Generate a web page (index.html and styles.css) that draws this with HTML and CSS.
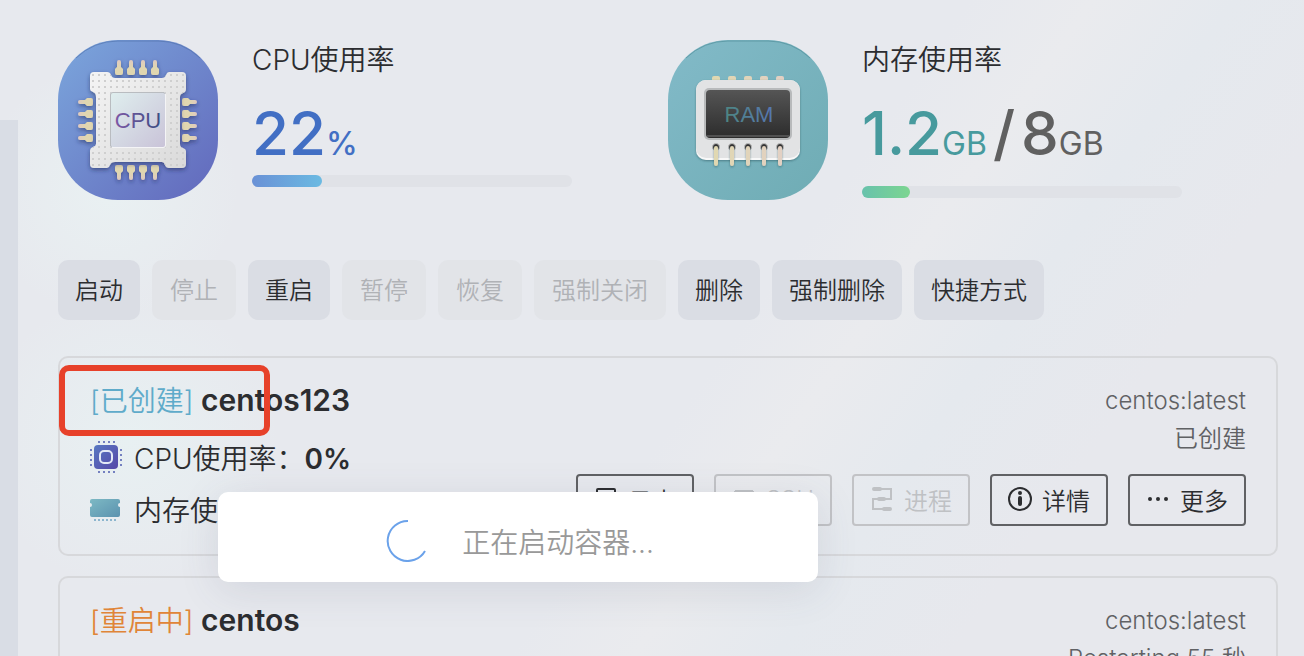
FILE: index.html
```html
<!DOCTYPE html>
<html lang="zh-CN">
<head>
  <meta charset="UTF-8" />
  <meta name="viewport" content="width=device-width, initial-scale=1.0"/>
  <title>容器管理</title>
  <link rel="stylesheet" href="styles.css">
</head>
<body>
  <div class="layout">
    <aside class="sidebar"></aside>

    <main class="content">
      <section class="stats">
        <div class="stat">
          <svg class="stat-icon" viewBox="0 0 160 160">
            <defs>
              <linearGradient id="cpuBg" x1="0" y1="0" x2="1" y2="1">
                <stop offset="0" stop-color="#7ba6dc"/>
                <stop offset="1" stop-color="#6268bc"/>
              </linearGradient>
              <linearGradient id="chip" x1="0" y1="0" x2="1" y2="1">
                <stop offset="0" stop-color="#f4f4f4"/>
                <stop offset="1" stop-color="#dadada"/>
              </linearGradient>
              <linearGradient id="core" x1="0" y1="0" x2="1" y2="1">
                <stop offset="0" stop-color="#dfeeee"/>
                <stop offset="1" stop-color="#c9c3d8"/>
              </linearGradient>
              <linearGradient id="cpuText" x1="0" y1="0" x2="1" y2="0">
                <stop offset="0" stop-color="#7d58a5"/>
                <stop offset="1" stop-color="#3b4d82"/>
              </linearGradient>
              <linearGradient id="gold" x1="0" y1="0" x2="0" y2="1">
                <stop offset="0" stop-color="#dfc9c0"/>
                <stop offset="0.5" stop-color="#e0d6b0"/>
                <stop offset="1" stop-color="#e0d6b0"/>
              </linearGradient>
              <pattern id="dots" width="6" height="6" patternUnits="userSpaceOnUse">
                <rect x="4" y="4" width="2" height="2" fill="#cfcfcf"/>
              </pattern>
              <g id="pin">
                <path d="M-2 7V2a2 2 0 0 1 4 0v5l2 2v4a2 2 0 0 1-2 2h-4a2 2 0 0 1-2-2V9z" fill="url(#gold)"/>
              </g>
              <g id="pins">
                <use href="#pin" x="-18"/>
                <use href="#pin" x="-6"/>
                <use href="#pin" x="6"/>
                <use href="#pin" x="18"/>
              </g>
              <path id="chipShape" d="M36 32H49Q52 32 53 35T57 38H104Q107 38 108 35T111 32H124Q128 32 128 36V49Q128 52 125 53T122 57V104Q122 107 125 108T128 111V124Q128 128 124 128H111Q108 128 107 125T104 122H57Q53 122 52 125T49 128H36Q32 128 32 124V111Q32 108 35 107T38 104V57Q38 53 35 52T32 49V36Q32 32 36 32Z"/>
              <filter id="soft" x="-20%" y="-20%" width="140%" height="140%">
                <feDropShadow dx="0" dy="2" stdDeviation="2" flood-color="#222a55" flood-opacity="0.55"/>
              </filter>
            </defs>
            <rect width="160" height="160" rx="60" fill="url(#cpuBg)"/>
            <path d="M18 18Q36 1 60 1H100Q124 1 142 18" fill="none" stroke="#4f6fa8" stroke-width="1" opacity="0.6"/>
            <g filter="url(#soft)">
              <use href="#pins" transform="translate(79 20)"/>
              <use href="#pins" transform="translate(79 140) scale(1 -1)"/>
              <use href="#pins" transform="translate(20 80) rotate(-90)"/>
              <use href="#pins" transform="translate(139 80) rotate(90)"/>
            </g>
            <use href="#chipShape" fill="url(#chip)" filter="url(#soft)"/>
            <use href="#chipShape" fill="url(#dots)"/>
            <rect x="52" y="52" width="56" height="56" rx="3" fill="#f4f4f6"/>
            <path d="M52 106V55Q52 52 55 52H106L108 54H54V108z" fill="#b9bcc0"/>
            <rect x="53" y="53" width="54" height="54" rx="2" fill="url(#core)"/>
            <text x="80" y="88" text-anchor="middle" class="chip-text" fill="url(#cpuText)">CPU</text>
          </svg>
          <div class="stat-body">
            <div class="stat-title">CPU使用率</div>
            <div class="stat-value blue">22<span class="unit percent">%</span></div>
            <div class="bar"><div class="bar-fill bar-cpu" style="width: 22%"></div></div>
          </div>
        </div>

        <div class="stat">
          <svg class="stat-icon" viewBox="0 0 160 160">
            <defs>
              <linearGradient id="ramBg" x1="0" y1="0" x2="1" y2="1">
                <stop offset="0" stop-color="#82bac8"/>
                <stop offset="1" stop-color="#6facb4"/>
              </linearGradient>
              <linearGradient id="screen" x1="0" y1="0" x2="0" y2="1">
                <stop offset="0" stop-color="#555"/>
                <stop offset="1" stop-color="#2c2c2c"/>
              </linearGradient>
              <linearGradient id="ramText" x1="0" y1="0" x2="1" y2="0">
                <stop offset="0" stop-color="#4d8681"/>
                <stop offset="1" stop-color="#5676b2"/>
              </linearGradient>
              <linearGradient id="legs" x1="44" y1="0" x2="116" y2="0" gradientUnits="userSpaceOnUse">
                <stop offset="0" stop-color="#e0d8b0"/>
                <stop offset="1" stop-color="#e2d0c4"/>
              </linearGradient>
              <filter id="ramShadow" x="-20%" y="-20%" width="140%" height="140%">
                <feDropShadow dx="0" dy="1" stdDeviation="1" flood-color="#1e4650" flood-opacity="0.5"/>
              </filter>
            </defs>
            <rect width="160" height="160" rx="60" fill="url(#ramBg)"/>
            <path d="M18 18Q36 1 60 1H100Q124 1 142 18" fill="none" stroke="#53909b" stroke-width="1" opacity="0.7"/>
            <path d="M44 42V38q0-2 2-2h4q2 0 2 2v4zM60 42V38q0-2 2-2h4q2 0 2 2v4zM76 42V38q0-2 2-2h4q2 0 2 2v4zM92 42V38q0-2 2-2h4q2 0 2 2v4zM108 42V38q0-2 2-2h4q2 0 2 2v4z" fill="url(#legs)"/>
            <rect x="28" y="40" width="104" height="80" rx="10" fill="#f8f8f8" filter="url(#ramShadow)"/>
            <rect x="28" y="40" width="104" height="78" rx="10" fill="#e2e3e4"/>
            <rect x="36" y="48" width="88" height="52" rx="5" fill="#b8babb"/>
            <rect x="38" y="50" width="84" height="48" rx="4" fill="url(#screen)"/>
            <path d="M39 96H121" stroke="#777" stroke-width="1"/>
            <text x="81" y="82" text-anchor="middle" class="chip-text" fill="url(#ramText)">RAM</text>
            <g fill="#333" stroke="#bcbcbc" stroke-width="1">
              <circle cx="48" cy="107" r="3.5"/>
              <circle cx="64" cy="107" r="3.5"/>
              <circle cx="80" cy="107" r="3.5"/>
              <circle cx="96" cy="107" r="3.5"/>
              <circle cx="112" cy="107" r="3.5"/>
            </g>
            <g fill="url(#legs)" filter="url(#ramShadow)">
              <path d="M46 108a2 2 0 0 1 4 0v16a2 2 0 0 1-4 0zM62 108a2 2 0 0 1 4 0v16a2 2 0 0 1-4 0zM78 108a2 2 0 0 1 4 0v16a2 2 0 0 1-4 0zM94 108a2 2 0 0 1 4 0v16a2 2 0 0 1-4 0zM110 108a2 2 0 0 1 4 0v16a2 2 0 0 1-4 0z"/>
            </g>
          </svg>
          <div class="stat-body">
            <div class="stat-title">内存使用率</div>
            <div class="stat-value memory"><span class="teal">1.2<span class="unit">GB</span></span><span class="slash">/</span>8<span class="unit">GB</span></div>
            <div class="bar"><div class="bar-fill bar-ram" style="width: 15%"></div></div>
          </div>
        </div>
      </section>

      <div class="toolbar">
        <button type="button">启动</button>
        <button type="button" disabled>停止</button>
        <button type="button">重启</button>
        <button type="button" disabled>暂停</button>
        <button type="button" disabled>恢复</button>
        <button type="button" disabled>强制关闭</button>
        <button type="button">删除</button>
        <button type="button">强制删除</button>
        <button type="button">快捷方式</button>
      </div>

      <section class="card">
        <div class="highlight"></div>
        <div class="card-left">
          <h3><span class="status created">[已创建]</span> centos123</h3>
          <div class="usage">
            <svg width="32" height="32" viewBox="0 0 32 32">
              <defs>
                <linearGradient id="miniCpu" x1="0" y1="0" x2="1" y2="1">
                  <stop offset="0" stop-color="#5878c2"/>
                  <stop offset="1" stop-color="#5748a8"/>
                </linearGradient>
              </defs>
              <rect x="4" y="4" width="24" height="24" rx="4" fill="url(#miniCpu)"/>
              <rect x="10" y="10" width="12" height="12" rx="4" fill="none" stroke="#e4e9f6" stroke-width="2"/>
              <path d="M8 1H25M8 31H25" stroke="#7480c0" stroke-width="2" stroke-dasharray="2 3"/>
              <path d="M1 8V25M31 8V25" stroke="#7480c0" stroke-width="2" stroke-dasharray="2 3"/>
            </svg>
            <span>CPU使用率：<b>0%</b></span>
          </div>
          <div class="usage">
            <svg width="32" height="32" viewBox="0 0 32 32">
              <defs>
                <linearGradient id="miniRam" x1="0" y1="0" x2="1" y2="1">
                  <stop offset="0" stop-color="#7db9c4"/>
                  <stop offset="1" stop-color="#5b92af"/>
                </linearGradient>
              </defs>
              <path d="M2 6H28Q30 6 30 8V10a2 2 0 0 0 0 4V22Q30 24 28 24H2Q0 24 0 22V14a2 2 0 0 0 0-4V8Q0 6 2 6Z" fill="url(#miniRam)"/>
              <path d="M4 27H27" stroke="#8db6ce" stroke-width="2" stroke-dasharray="2 2"/>
            </svg>
            <span>内存使用率：<b>0%</b></span>
          </div>
        </div>
        <div class="card-right">
          <div class="image-name">centos:latest</div>
          <div class="state">已创建</div>
          <div class="actions">
            <button type="button">
              <svg width="24" height="24" viewBox="0 0 24 24" fill="none" stroke="currentColor" stroke-width="2">
                <rect x="3" y="2" width="18" height="20" rx="1"/>
                <path d="M7 8h10M7 13h10"/>
              </svg>
              日志
            </button>
            <button type="button" disabled>
              <svg width="24" height="24" viewBox="0 0 24 24" fill="none" stroke="currentColor" stroke-width="2">
                <path d="M3 5h18v14H3z"/>
                <path d="M3 5h18" stroke-width="4"/>
              </svg>
              SSH
            </button>
            <button type="button" disabled>
              <svg width="24" height="24" viewBox="0 0 24 24" fill="none" stroke="currentColor" stroke-width="2">
                <path d="M5 2H21V12H3V22H19"/>
                <path d="M4 2h6M9 12h5M14 22h6" stroke-width="4" stroke-linecap="round"/>
              </svg>
              进程
            </button>
            <button type="button">
              <svg width="24" height="24" viewBox="0 0 24 24" fill="none" stroke="currentColor" stroke-width="2">
                <circle cx="12" cy="12" r="11"/>
                <path d="M12 11v6" stroke-width="4" stroke-linecap="round"/>
                <circle cx="12" cy="6" r="2" fill="currentColor" stroke="none"/>
              </svg>
              详情
            </button>
            <button type="button">
              <svg width="24" height="24" viewBox="0 0 24 24" fill="currentColor">
                <circle cx="4" cy="12" r="2"/>
                <circle cx="12" cy="12" r="2"/>
                <circle cx="20" cy="12" r="2"/>
              </svg>
              更多
            </button>
          </div>
        </div>
      </section>

      <section class="card">
        <div class="card-left">
          <h3><span class="status restarting">[重启中]</span> centos</h3>
        </div>
        <div class="card-right">
          <div class="image-name">centos:latest</div>
          <div class="state">Restarting 55 秒</div>
        </div>
      </section>
    </main>
  </div>

  <div class="toast" role="status">
    <svg width="42" height="42" viewBox="0 0 42 42">
      <path d="M22 1A20 20 0 1 0 39 31" fill="none" stroke="#6ba2ea" stroke-width="2"/>
    </svg>
    <span>正在启动容器...</span>
  </div>
</body>
</html>
```
FILE: styles.css
```css
* {
  box-sizing: border-box;
}
body {
  margin: 0;
  height: 100vh;
  overflow: hidden;
  font-family: Inter, "Noto Sans CJK SC", sans-serif;
  font-weight: 350;
  color: #2c2d30;
  background:
    radial-gradient(circle at 110px 190px, rgba(234, 244, 244, 0.7), rgba(234, 244, 244, 0) 130px),
    radial-gradient(circle at 130px 440px, rgba(232, 242, 243, 0.8), rgba(232, 242, 243, 0) 150px),
    linear-gradient(125deg, #e7e9ee 55%, #eaebee 62%, #e5e9ee 70%, #e7e8ed 80%);
}
button {
  font: inherit;
  color: inherit;
}
.layout {
  display: flex;
  height: 100vh;
}
.sidebar {
  flex: 0 0 18px;
  margin-top: 120px;
  background: #d9dde5;
}
.content {
  flex: 1;
  padding: 40px 26px 0 40px;
}

/* usage overview */
.stats {
  display: grid;
  grid-template-columns: 1fr 1fr;
}
.stat {
  display: flex;
  gap: 34px;
}
.stat-icon {
  width: 160px;
  height: 160px;
}
.chip-text {
  font-family: "Liberation Sans", Arial, sans-serif;
  font-size: 22px;
}
.stat-title {
  font-size: 28px;
  line-height: 40px;
}
.stat-value {
  margin: 19px 0 8px;
  font-size: 60px;
  line-height: 68px;
  font-weight: 500;
  color: #606060;
  white-space: nowrap;
}
.stat-value.memory {
  margin-bottom: 19px;
}
.stat-value.blue {
  color: #426fc4;
}
.teal {
  color: #479a9d;
}
.unit {
  font-size: 32px;
  line-height: 32px;
  font-weight: 400;
}
.percent {
  font-weight: 500;
}
.slash {
  margin: 0 6px;
}
.bar {
  width: 320px;
  height: 12px;
  border-radius: 6px;
  background: #e0e2e7;
}
.bar-fill {
  height: 12px;
  border-radius: 6px;
}
.bar-cpu {
  background: linear-gradient(90deg, #6a91d6, #6bbae2);
}
.bar-ram {
  background: linear-gradient(90deg, #68c2ac, #7cd590);
}

/* batch actions */
.toolbar {
  display: flex;
  gap: 12px;
  margin: 60px 0 36px;
}
.toolbar button {
  height: 60px;
  padding: 0 17px 4px;
  border: 0;
  border-radius: 10px;
  font-size: 24px;
  background: #dadde4;
}
.toolbar button:disabled {
  padding: 0 18px 4px;
  color: #b0b2b6;
  background: #e2e4e8;
}

/* container list */
.card {
  position: relative;
  display: flex;
  justify-content: space-between;
  height: 200px;
  margin-bottom: 20px;
  padding: 22px 30px;
  border: 2px solid #d7d8db;
  border-radius: 10px;
}
.card h3 {
  margin: 0;
  font-size: 30px;
  line-height: 40px;
  font-weight: 600;
}
.status {
  font-size: 28px;
  font-weight: 350;
}
.created {
  color: #5fabca;
}
.restarting {
  color: #e08538;
}
.usage {
  display: flex;
  align-items: center;
  gap: 12px;
  height: 40px;
  margin-top: 16px;
  font-size: 28px;
}
.usage + .usage {
  margin-top: 12px;
}
.usage b {
  font-weight: 600;
}
.card-right {
  text-align: right;
  font-size: 24px;
  color: #606164;
}
.image-name {
  line-height: 42px;
}
.state {
  line-height: 34px;
}
.actions {
  display: flex;
  justify-content: flex-end;
  gap: 20px;
  margin-top: 18px;
}
.actions button {
  display: flex;
  align-items: center;
  justify-content: center;
  gap: 10px;
  width: 118px;
  height: 52px;
  padding: 0 0 2px;
  border: 2px solid #606164;
  border-radius: 4px;
  color: #2c2d30;
  background: none;
}
.actions button:disabled {
  color: #bfc1c4;
  border-color: #c2c3c6;
}
.highlight {
  position: absolute;
  top: 7px;
  left: -1px;
  width: 211px;
  height: 71px;
  border: 6px solid #e7412a;
  border-radius: 10px;
}

.toast {
  position: absolute;
  top: 492px;
  left: 218px;
  display: flex;
  align-items: center;
  justify-content: center;
  gap: 34px;
  width: 600px;
  height: 90px;
  padding: 8px 0 0 4px;
  border-radius: 10px;
  font-size: 28px;
  color: #999;
  background: #fff;
  box-shadow: 0 8px 40px rgba(70, 80, 110, 0.13);
}
```
